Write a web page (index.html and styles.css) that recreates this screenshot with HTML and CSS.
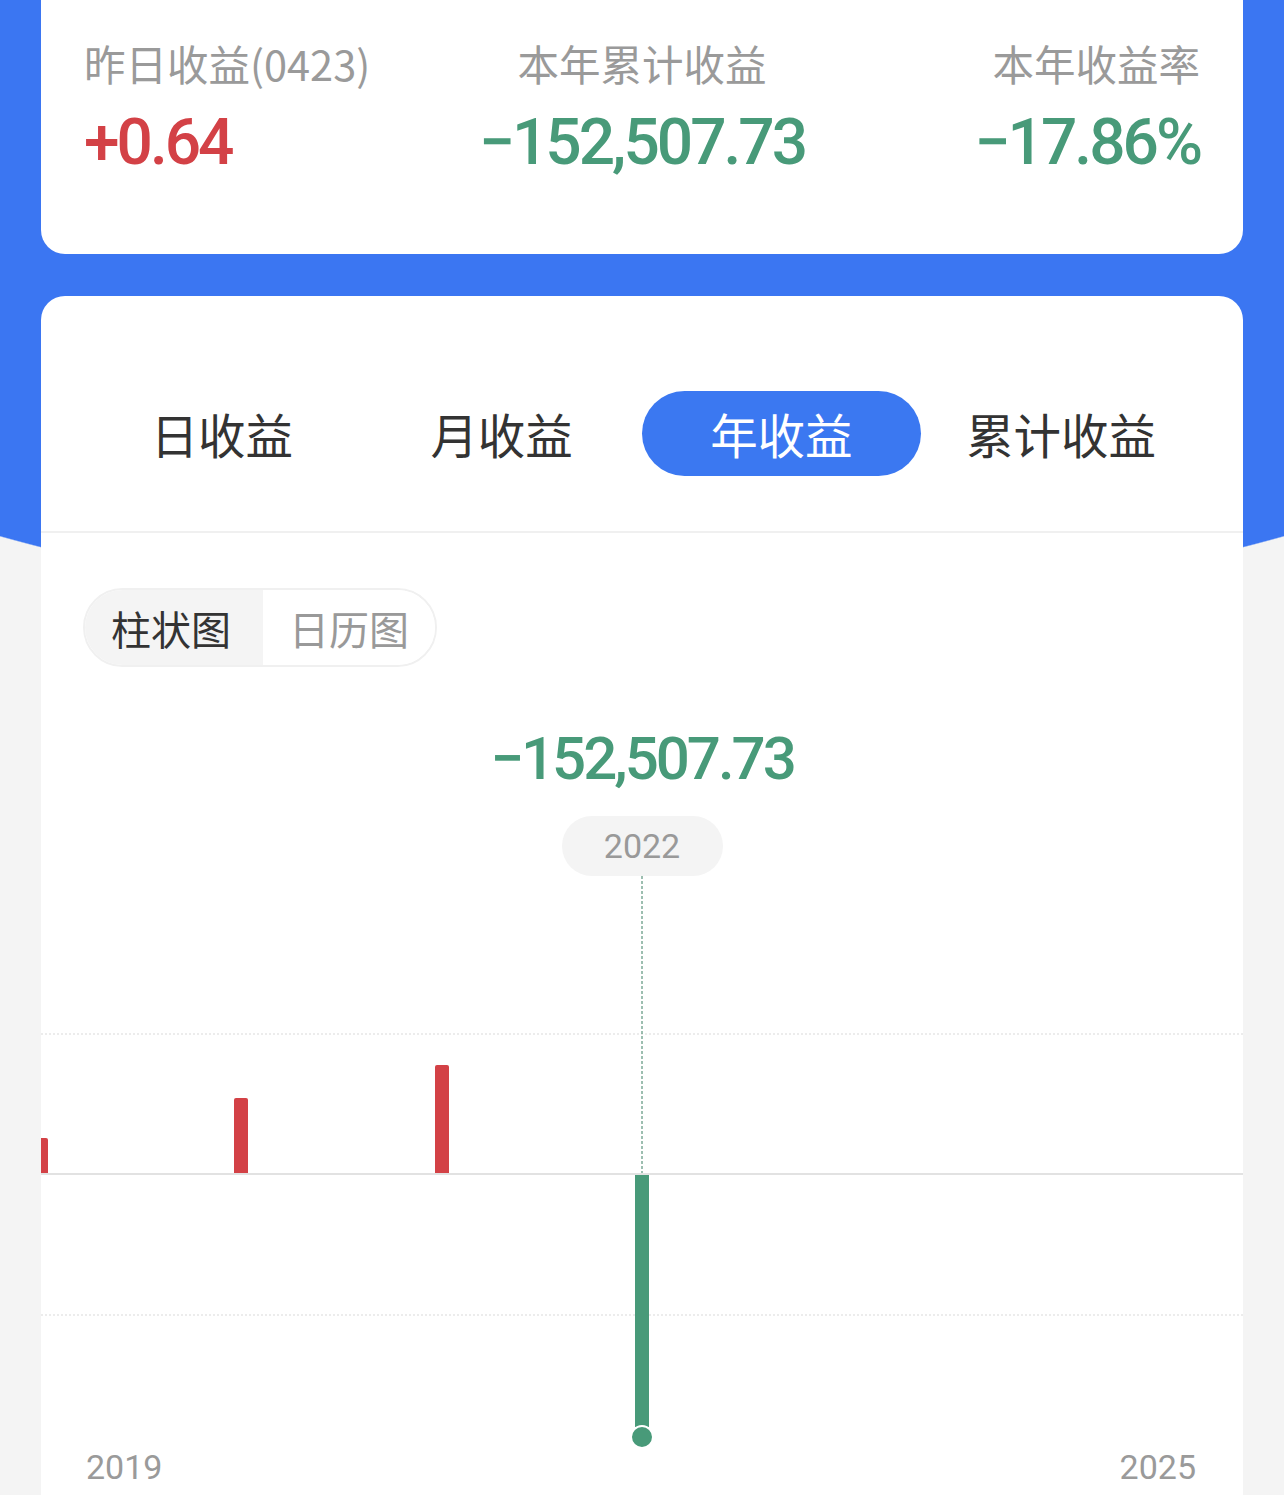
FILE: index.html
```html
<!DOCTYPE html>
<html lang="zh">
<head>
<meta charset="utf-8">
<link rel="stylesheet" href="styles.css">
</head>
<body>
<div class="page">
  <section class="summary">
    <div class="stat">
      <div class="label">昨日收益(0423)</div>
      <div class="value up">+0.64</div>
    </div>
    <div class="stat center">
      <div class="label">本年累计收益</div>
      <div class="value down">−152,507.73</div>
    </div>
    <div class="stat right">
      <div class="label">本年收益率</div>
      <div class="value down">−17.86%</div>
    </div>
  </section>

  <section class="chart-card">
    <div class="tabs">
      <div class="tab">日收益</div>
      <div class="tab">月收益</div>
      <div class="tab active">年收益</div>
      <div class="tab">累计收益</div>
    </div>
    <div class="body">
      <div class="toggle">
        <div class="seg on">柱状图</div>
        <div class="seg off">日历图</div>
      </div>
      <div class="big-value">−152,507.73</div>
      <div class="year-pill">2022</div>
      <svg class="chart" width="1202" height="619" viewBox="0 0 1202 619">
        <line x1="0" y1="158" x2="1202" y2="158" stroke="#ececec" stroke-width="2" stroke-dasharray="2 2"/>
        <line x1="0" y1="439" x2="1202" y2="439" stroke="#ececec" stroke-width="2" stroke-dasharray="2 2"/>
        <line x1="0" y1="298" x2="1202" y2="298" stroke="#e2e2e2" stroke-width="2"/>
        <line x1="601" y1="0" x2="601" y2="297" stroke="#3a7f63" stroke-width="1" stroke-dasharray="3 2"/>
        <path d="M-7 297 V264 a2 2 0 0 1 2 -2 H5 a2 2 0 0 1 2 2 V297 Z" fill="#d34146"/>
        <path d="M193 297 V224 a2 2 0 0 1 2 -2 H205 a2 2 0 0 1 2 2 V297 Z" fill="#d34146"/>
        <path d="M394 297 V191 a2 2 0 0 1 2 -2 H406 a2 2 0 0 1 2 2 V297 Z" fill="#d34146"/>
        <rect x="594" y="299" width="14" height="252" fill="#489a79"/>
        <circle cx="601" cy="561" r="11" fill="#489a79" stroke="#ffffff" stroke-width="2"/>
        <text class="axis" x="45" y="603">2019</text>
        <text class="axis" x="1155" y="603" text-anchor="end">2025</text>
      </svg>
    </div>
  </section>
</div>
</body>
</html>
```

FILE: styles.css
```css
html, body {
  margin: 0;
  padding: 0;
}
body {
  background: #f4f4f4;
  font-family: "Noto Sans CJK SC", "Noto Sans", sans-serif;
  overflow: hidden;
}
.page {
  min-height: 1495px;
  padding: 0 41px;
  background: radial-gradient(ellipse 1284px 620px at 642px 0, #3b76f2 99.8%, #f4f4f4 100%);
}
.summary {
  background: #fff;
  border-radius: 0 0 24px 24px;
  height: 254px;
  box-sizing: border-box;
  padding: 38px 43px 0;
  display: grid;
  grid-template-columns: 1fr 1fr 1fr;
}
.stat {
  display: flex;
  flex-direction: column;
  align-items: flex-start;
}
.stat.center { align-items: center; }
.stat.right { align-items: flex-end; }
.label {
  font-size: 41.5px;
  line-height: 50px;
  color: #9a9a9a;
  white-space: nowrap;
}
.value {
  margin-top: 23px;
  font-family: Roboto, "Liberation Sans", sans-serif;
  font-size: 64px;
  line-height: 64px;
  font-weight: 500;
  letter-spacing: -3px;
  white-space: nowrap;
}
.up { color: #d34146; }
.down { color: #489a79; }

.chart-card {
  margin-top: 42px;
  background: #fff;
  border-radius: 24px 24px 0 0;
  height: 1199px;
  overflow: hidden;
}
.tabs {
  display: grid;
  grid-template-columns: repeat(4, 1fr);
  padding: 95px 42px 55px 41px;
  border-bottom: 2px solid #f0f0f0;
}
.tab {
  height: 85px;
  display: flex;
  align-items: center;
  justify-content: center;
  font-size: 47.5px;
  color: #333;
  border-radius: 43px;
}
.tab.active {
  background: #3b78f1;
  color: #fff;
}
.body {
  display: flex;
  flex-direction: column;
  align-items: center;
  padding-top: 55px;
}
.toggle {
  align-self: flex-start;
  margin-left: 42px;
  display: flex;
  height: 79px;
  box-sizing: border-box;
  border: 2px solid #f0f0f0;
  border-radius: 40px;
  overflow: hidden;
}
.seg {
  display: flex;
  align-items: center;
  font-size: 40px;
}
.seg.on {
  background: #f4f4f4;
  color: #333;
  padding: 0 32px 0 26px;
}
.seg.off {
  background: #fff;
  color: #999;
  padding: 0 26px 0 26px;
}
.big-value {
  margin-top: 62px;
  font-family: Roboto, "Liberation Sans", sans-serif;
  font-size: 60px;
  line-height: 60px;
  font-weight: 500;
  letter-spacing: -3px;
  color: #489a79;
}
.year-pill {
  margin-top: 27px;
  width: 161px;
  height: 60px;
  border-radius: 30px;
  background: #f4f4f4;
  color: #999;
  display: flex;
  align-items: center;
  justify-content: center;
  font-family: Roboto, "Liberation Sans", sans-serif;
  font-size: 34px;
}
.chart {
  display: block;
  overflow: visible;
}
.axis {
  font-family: Roboto, "Liberation Sans", sans-serif;
  font-size: 34px;
  fill: #9a9a9a;
}
```
